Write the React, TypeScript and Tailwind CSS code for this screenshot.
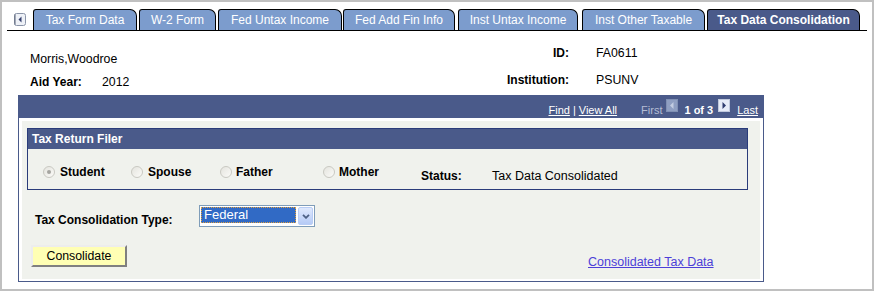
import React from "react";

const tabs = [
  { label: "Tax Form Data", w: "w-[104px]", ml: "ml-[7px]" },
  { label: "W-2 Form", w: "w-[77px]", ml: "ml-[2px]" },
  { label: "Fed Untax Income", w: "w-[124px]", ml: "ml-[2px]" },
  { label: "Fed Add Fin Info", w: "w-[112px]", ml: "ml-[1px]" },
  { label: "Inst Untax Income", w: "w-[120px]", ml: "ml-[3px]" },
  { label: "Inst Other Taxable", w: "w-[123px]", ml: "ml-[4px]" },
  { label: "Tax Data Consolidation", w: "w-[153px]", ml: "ml-[2px]", active: true },
];

function Radio({ checked }: { checked?: boolean }) {
  return (
    <span className="flex h-[12px] w-[12px] shrink-0 items-center justify-center rounded-full border border-[#c9c9c2] bg-[linear-gradient(135deg,#e4e4de,#fbfbf8)]">
      {checked && <span className="h-[4px] w-[4px] rounded-full bg-[#a5a5a0]" />}
    </span>
  );
}

function NavArrow({ dir, disabled }: { dir: "left" | "right"; disabled?: boolean }) {
  return (
    <svg width="12" height="13" viewBox="0 0 12 13" className="shrink-0">
      <rect x="0.5" y="0.5" width="11" height="12" fill={disabled ? "#8f9fc2" : "#e6ebf7"} stroke={disabled ? "#8090b4" : "#c0c8dc"} />
      {dir === "left" ? (
        <polygon points="7.5,3 7.5,10 4,6.5" fill={disabled ? "#c3cde2" : "#2e3b6e"} />
      ) : (
        <polygon points="4.5,3 4.5,10 8,6.5" fill={disabled ? "#c3cde2" : "#2e3b6e"} />
      )}
    </svg>
  );
}

export default function App() {
  return (
    <div className="h-[291px] w-[874px] overflow-hidden border-2 border-[#c0c0c0] bg-white font-['Liberation_Sans',Arial,sans-serif] text-[12px] leading-[14px] text-black">
      {/* tab strip */}
      <div className="ml-[5px] mt-[7px] flex h-[22px] w-[860px] items-end border-b border-black">
        <svg width="12" height="13" viewBox="0 0 12 13" className="mb-[4px] ml-[7px] shrink-0">
          <rect x="0.5" y="0.5" width="11" height="12" rx="2" fill="#eef1f7" stroke="#8a94a8" />
          <line x1="1" y1="1.5" x2="1" y2="11.5" stroke="#5a6478" />
          <polygon points="7.5,3.5 7.5,9.5 4.5,6.5" fill="#34406e" />
        </svg>
        {tabs.map((t) => (
          <div
            key={t.label}
            className={`${t.w} ${t.ml} flex h-[21px] shrink-0 items-center justify-center rounded-tl-[3px] rounded-tr-[7px] border border-b-0 border-black text-white ${
              t.active ? "bg-[#4a5a8a] font-bold" : "bg-[#7c9ccd]"
            }`}
          >
            {t.label}
          </div>
        ))}
      </div>

      {/* key fields */}
      <div className="flex">
        <div className="w-[398px] pl-[28px] pt-[21px]">
          <div className="text-[12.3px]">Morris,Woodroe</div>
          <div className="mt-[9px] flex">
            <span className="w-[72px] font-bold">Aid Year:</span>
            <span className="text-[12.3px]">2012</span>
          </div>
        </div>
        <div className="grid grid-cols-[169px_auto] gap-x-[27px] gap-y-[11px] pt-[15px]">
          <span className="text-right font-bold">ID:</span>
          <span className="text-[12.3px]">FA0611</span>
          <span className="text-right font-bold">Institution:</span>
          <span className="text-[12.3px]">PSUNV</span>
        </div>
      </div>

      {/* scroll area */}
      <div className="ml-[16px] mt-[6px] w-[746px] border border-[#4a5a8a]">
        <div className="flex h-[22px] items-start justify-end bg-[#4a5a8a] pr-[5px] pt-[8px] text-[11px] leading-[13px] text-white">
          <span className="underline">Find</span>
          <span className="mx-[3px]">|</span>
          <span className="underline">View All</span>
          <span className="ml-[24px] text-[#b5bdd5]">First</span>
          <span className="ml-[4px] -mt-[5px]">
            <NavArrow dir="left" disabled />
          </span>
          <span className="ml-[6px] font-bold">1 of 3</span>
          <span className="ml-[5px] -mt-[5px]">
            <NavArrow dir="right" />
          </span>
          <span className="ml-[7px] underline">Last</span>
        </div>
        <div className="bg-white px-[3px] pb-[2px] pt-[3px]">
          <div className="h-[158px] bg-[#f0f2ed] pt-[7px]">
            {/* group box */}
            <div className="ml-[5px] w-[721px] border border-[#2a3c7a]">
              <div className="flex h-[20px] items-center bg-[#4a5a8a] pl-[4px] font-bold text-white">Tax Return Filer</div>
              <div className="flex h-[40px] items-start pl-[15px] pt-[16px]">
                <div className="flex w-[88px] items-center gap-[5px]">
                  <Radio checked />
                  <span className="font-bold">Student</span>
                </div>
                <div className="flex w-[89px] items-center gap-[5px]">
                  <Radio />
                  <span className="font-bold">Spouse</span>
                </div>
                <div className="flex w-[103px] items-center gap-[4px]">
                  <Radio />
                  <span className="font-bold">Father</span>
                </div>
                <div className="flex w-[98px] items-center gap-[4px]">
                  <Radio />
                  <span className="font-bold">Mother</span>
                </div>
                <span className="mt-[4px] w-[71px] font-bold">Status:</span>
                <span className="mt-[4px] text-[12.5px]">Tax Data Consolidated</span>
              </div>
            </div>

            {/* consolidation type */}
            <div className="mt-[15px] flex items-start">
              <span className="ml-[13px] mt-[8px] w-[164px] font-bold">Tax Consolidation Type:</span>
              <div className="flex h-[22px] w-[116px] border border-[#7f9db9] bg-white p-[1px]">
                <div className="flex h-[16px] w-[95px] items-center border border-dotted border-[#e0a040] bg-[#316ac5] pl-[2px] text-[13px] text-white">
                  Federal
                </div>
                <div className="ml-auto flex h-[18px] w-[15px] items-center justify-center rounded-[2px] border border-[#b9cdf5] bg-[linear-gradient(180deg,#dfe9fd,#b6cbf6)]">
                  <svg width="8" height="5" viewBox="0 0 8 5">
                    <polyline points="1,0.8 4,3.8 7,0.8" fill="none" stroke="#4d6185" strokeWidth="1.8" />
                  </svg>
                </div>
              </div>
            </div>

            {/* actions */}
            <div className="mt-[18px] flex items-start">
              <button className="ml-[9px] flex h-[22px] w-[96px] items-center justify-center border-2 border-b-[#808080] border-l-[#ededed] border-r-[#808080] border-t-[#ededed] bg-[#ffffb4] text-[12.3px] text-black">
                Consolidate
              </button>
              <a className="ml-[461px] mt-[10px] whitespace-nowrap text-[12.5px] text-[#4c3fd8] underline">Consolidated Tax Data</a>
            </div>
          </div>
        </div>
      </div>
    </div>
  );
}
